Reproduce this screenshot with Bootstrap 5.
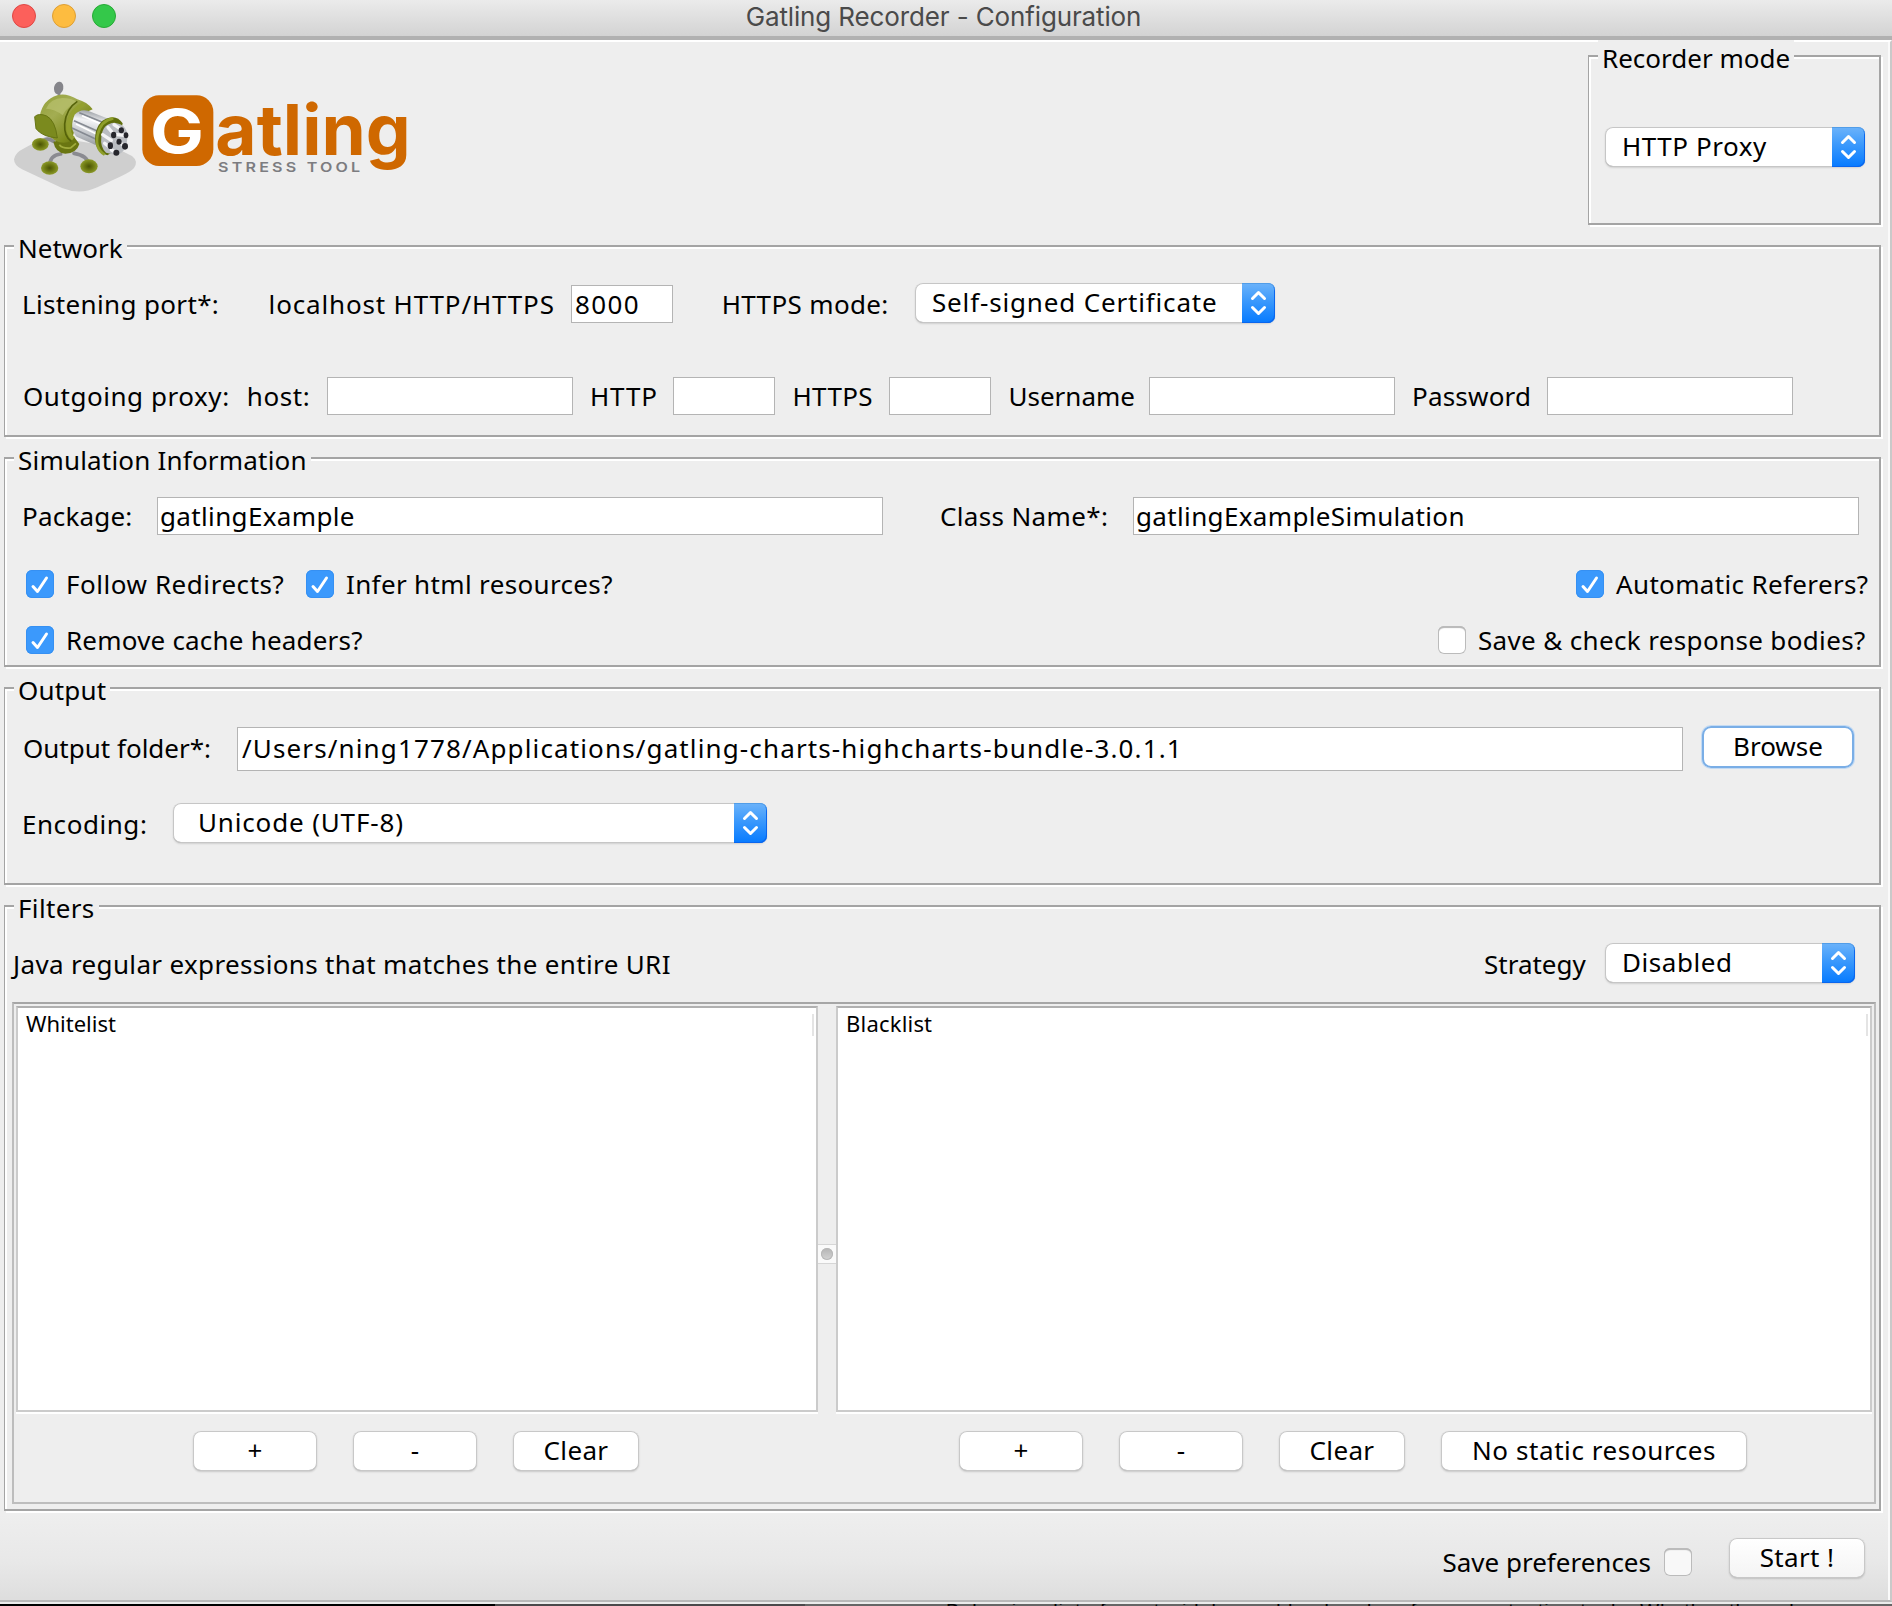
<!DOCTYPE html>
<html lang="en">
<head>
<meta charset="utf-8">
<title>Gatling Recorder - Configuration</title>
<link href="https://cdn.jsdelivr.net/npm/bootstrap@5.3.0/dist/css/bootstrap.min.css" rel="stylesheet">
<style>
  body { width: 1892px; height: 1606px; overflow: hidden; background: #555; color: #000;
    font-family: "Noto Sans", sans-serif; font-size: 26px; line-height: 38px; letter-spacing: .35px; white-space: nowrap; }

  /* letter-spacing steps */
  .ls-0 { letter-spacing: 0; }
  .ls-2 { letter-spacing: .2px; }
  .ls-5 { letter-spacing: .55px; }
  .ls-9 { letter-spacing: .84px; }
  .ls-12 { letter-spacing: 1.13px; }
  .ls-16 { letter-spacing: 1.4px; }

  /* title bar */
  .titlebar { height: 40px; background: linear-gradient(#ebebeb, #d3d3d3 36px); border-bottom: 4px solid #b1b1b1; }
  .titlebar h1 { font: 400 26px/34px Inter, sans-serif; color: #4a4a4a; letter-spacing: -.13px; padding: 0 5px 0 0; margin: 0; }
  .lights { left: 12px; top: 4px; gap: 16px; }
  .lights i { width: 24px; height: 24px; border-radius: 50%; border: 1px solid; }
  .l-close { background: #fc605b; border-color: #df4744 !important; }
  .l-min { background: #fdbc40; border-color: #de9f34 !important; }
  .l-zoom { background: #34c84a; border-color: #27aa35 !important; }

  /* window body */
  .window-body { height: 1562px; background: linear-gradient(#eee 1473px, #e8e8e8 1520px, #dddddd 1560px);
    border-top: 2px solid #fff; border-right: 2px solid #c9c9c9; border-bottom: 2px solid #b9b9b9; box-shadow: inset -2px 0 #fafafa; padding-left: 4px; padding-right: 9px; }
  .head-area { height: 203px; }
  .logo { width: 440px; height: 166px; margin-left: -4px; }

  /* etched group box */
  .etched { border: 2px solid #a4a4a4; border-left-width: 1px; box-shadow: 2px 2px 0 #fff, inset 2px 2px 0 #fff; margin-bottom: 20px; }
  .etched > .cap { float: none; display: table; margin: -18px 0 0 9px; padding: 0 4px; width: auto; font-size: inherit; line-height: 38px; background: #eee; height: 38px; }
  .recorder { width: 293px; height: 170px; margin-top: 13px; }
  .recorder .pop { margin: 50px 0 0 16px; width: 260px; }

  .line { display: grid; height: 38px; }
  .line > label { padding-left: 1px; }
  .line > .chk { padding-left: 0; }
  .line-port { grid-template-columns: 246.6px 303.4px 149.7px 194.3px 360px; padding-left: 16px; margin-top: 18px; }
  .line-proxy { grid-template-columns: 223.8px 81.2px 262px 84px 118.5px 97.5px 118.5px 141.5px 262px 136px 246px; padding-left: 17px; margin: 54px 0 20px; }
  .line-class { grid-template-columns: 136px 782px 194px 726px; padding-left: 16px; margin-top: 18px; }
  .line-chk1 { grid-template-columns: 280px 1270px auto; padding-left: 21px; margin-top: 30px; }
  .line-chk2 { grid-template-columns: 1412px auto; padding-left: 21px; margin: 18px 0 6px; }
  .line-folder { grid-template-columns: 215px 1465px 152px; height: 44px; line-height: 42px; padding-left: 17px; margin-top: 18px; }
  .line-enc { grid-template-columns: 152px 594px; padding-left: 16px; margin: 34px 0 40px; }
  .line-strategy { grid-template-columns: 1470px 122px 250px; padding-left: 8px; margin-top: 18px; }

  /* text fields */
  .field { height: 38px; width: 246px; border: 1px solid #b4b4b4; border-radius: 0; padding: 0 2px; font: inherit; line-height: 36px; color: #000; background: #fff; box-shadow: none; letter-spacing: inherit; }
  .field-port { width: 102px; padding-left: 3px; }
  .field-long { width: 726px; }
  .field-path { width: 1446px; height: 44px; padding: 0 4px 2px; }
  .field.ls-16 { letter-spacing: 1.4px; }
  .field.ls-12 { letter-spacing: 1.13px; }

  /* pop-up menu */
  .pop { height: 40px; background: #fff; border-radius: 8px; padding-left: 17px; line-height: 38px;
    box-shadow: inset 0 0 0 1px #c6c6c6, inset 0 -1px #a8a8a8, 0 1px 2px rgba(0,0,0,.13); }
  .line .pop { margin-top: -2px; }
  .line .pop-wide { padding-left: 25px; }
  .pop .arrows { width: 33px; height: 40px; border-radius: 0 7px 7px 0; background: linear-gradient(#6cb3fa, #3b99fc 45%, #067aff); box-shadow: inset 0 1px #519de8, inset -1px -1px #0a66ee; }
  .arrows svg { display: block; }

  /* check boxes */
  .chk { gap: 12px; }
  .tick { width: 28px; height: 28px; border-radius: 6px; background: #fff; box-shadow: inset 0 0 0 1px #bbb, inset 0 2px 1px #b5b5b5; flex: none; }
  .tick-on { background: #3b99fc; box-shadow: inset 0 0 0 1px #3690f2; }
  .tick svg { display: block; }

  /* push buttons */
  .push { height: 40px; width: 124px; padding: 0; border: 0; border-radius: 8px; background: #fff; color: #000; font: inherit; line-height: 38px; letter-spacing: inherit;
    display: flex; align-items: flex-start; justify-content: center;
    box-shadow: inset 0 0 0 1px #c8c8c8, inset 0 -1px #a8a8a8, 0 1px 2px rgba(0,0,0,.16); }
  .push-clear { width: 126px; }
  .push-static { width: 306px; letter-spacing: .58px; }
  .push-focus { width: 152px; height: 42px; margin-top: -1px; line-height: 40px; border-radius: 9px; letter-spacing: 0; box-shadow: inset 0 0 0 2px #7aaee6, 0 0 0 1px #c3daf3; }
  .push-start { width: 136px; background: linear-gradient(#fff, #f4f4f4); margin-left: 37px; }

  /* filter tables */
  .tables { height: 502px; margin: 19px 3px 5px 7px; border: 2px solid #bdbdbd; border-top-color: #a6a6a6; padding: 2px; }
  .pane { height: 406px; background: #fff; border: 2px solid #cbcbcb; border-top-color: #b0b0b0; box-shadow: 0 2px #fff; padding: 0 2px 0 8px; font-size: 22px; line-height: 31px; }
  .pane-white { width: 802px; }
  .pane-black { width: 1036px; }
  .grip-col { width: 2px; height: 22px; background: #e4e4e4; margin-top: 6px; }
  .divider { width: 18px; padding-top: 238px; }
  .knob { height: 20px; background: #fafafa; border: solid #d6d6d6; border-width: 1px 0; }
  .knob i { width: 12px; height: 12px; border-radius: 50%; background: linear-gradient(#b4b4b4, #d4d4d4); box-shadow: inset 0 0 0 1px #b8b8b8; }
  .actions { gap: 36px; margin: 19px 0 0 177px; }
  .gap-mid { margin-left: 284px; }

  .foot { height: 38px; padding-right: 16px; margin-top: 32px; }
  .foot .tick { margin-left: 13px; background: #f8f8f8; }
  .foot .push { margin-top: -8px; }

  /* page showing under the window edge */
  .under { height: 4px; border-top: 2px solid #ececec; background: linear-gradient(90deg, #000 495px, #4b494b 495px, #4b494b 805px, #666 805px); }
  .under p { height: 2px; overflow: hidden; margin: 0 0 0 946px; font: 20px/20px "Liberation Sans", sans-serif; letter-spacing: .95px; }
  .under span { display: block; margin-top: -3px; }
</style>
</head>
<body>
<header class="titlebar position-relative">
  <div class="lights position-absolute d-flex"><i class="l-close"></i><i class="l-min"></i><i class="l-zoom"></i></div>
  <h1 class="text-center">Gatling Recorder - Configuration</h1>
</header>

<main class="window-body">
  <div class="head-area d-flex justify-content-between align-items-start">
    <svg class="logo" viewBox="0 126 1320 498">
      <defs>
        <linearGradient id="gr" x1="0" y1="0" x2="1" y2="1"><stop offset="0" stop-color="#93a03a"/><stop offset=".35" stop-color="#a3ad52"/><stop offset=".7" stop-color="#7f8c1c"/><stop offset="1" stop-color="#4f5a08"/></linearGradient>
        <radialGradient id="ft"><stop offset="0" stop-color="#4a5306"/><stop offset=".5" stop-color="#6b7711"/><stop offset="1" stop-color="#8c9a2a"/></radialGradient>
        <linearGradient id="br" x1=".6" y1="0" x2=".4" y2="1"><stop offset="0" stop-color="#8d9298"/><stop offset=".3" stop-color="#f2f3f5"/><stop offset=".7" stop-color="#b9bdc2"/><stop offset="1" stop-color="#85898e"/></linearGradient>
      </defs>
      <path d="M42 478Q45 458 70 446L140 408L340 440L396 468Q416 484 402 504Q392 516 360 530L292 562Q240 586 186 564L66 508Q42 496 42 478Z" fill="#cfcfcf"/>
      <g fill="none" stroke="#8a8a90" stroke-width="11" stroke-linecap="round">
        <path d="M160 424Q138 408 122 432"/><path d="M182 462Q150 464 148 500"/><path d="M222 460Q262 466 266 494"/><path d="M177 298V270" stroke-width="8"/>
      </g>
      <ellipse cx="176" cy="264" rx="14" ry="19" fill="#85858a" transform="rotate(12 176 264)"/>
      <ellipse cx="121" cy="433" rx="25" ry="19" fill="url(#ft)"/>
      <ellipse cx="149" cy="504" rx="26" ry="20" fill="url(#ft)"/>
      <ellipse cx="267" cy="499" rx="26" ry="21" fill="url(#ft)"/>
      <path d="M160 425Q166 458 196 461Q230 460 238 432L222 410Z" fill="#6a7611"/>
      <path d="M178 434Q186 446 212 444L228 430" fill="none" stroke="#a2ad3e" stroke-width="5"/>
      <path d="M120 346Q128 300 172 286Q198 278 232 298Q262 306 278 328L238 346L214 422Q192 434 166 422L124 390Z" fill="url(#gr)"/>
      <path d="M104 350Q116 338 140 348Q166 362 172 414Q126 410 108 386Z" fill="#7b8a1e" stroke="#667413" stroke-width="3"/>
      <path d="M138 326Q152 294 188 294Q214 294 232 306Q202 318 188 346Q164 326 138 326Z" fill="#bcc371" opacity=".65"/>
      <path d="M232 304Q198 326 194 372Q192 410 214 424" fill="none" stroke="#55620a" stroke-width="5"/>
      <path d="M252 312Q214 328 206 370Q202 402 220 416" fill="none" stroke="#93a02f" stroke-width="13"/>
      <path d="M224 344Q240 326 264 332L344 364L312 446L230 410Q206 386 224 344Z" fill="url(#br)"/>
      <path d="M238 338L330 376M222 362L312 402M216 384L306 426" stroke="#858a92" stroke-width="5"/>
      <path d="M246 347L326 382M228 372L306 410" stroke="#fff" stroke-width="5"/>
      <path d="M322 466Q280 452 286 404Q294 356 338 352Q356 352 368 370L350 450Z" fill="#5f6d0c"/>
      <path d="M314 464Q284 446 293 404Q302 362 340 355" fill="none" stroke="#8f9f2a" stroke-width="8"/>
      <path d="M304 410Q308 370 344 368Q382 374 382 408Q382 456 350 466L318 458Q300 440 304 410Z" fill="#babdc2"/>
      <path d="M324 382L338 399M342 374L360 386M308 404L334 421M314 430L330 442M334 450L346 456M350 404L374 406M352 424L372 436" fill="none" stroke="#f4f4f6" stroke-width="10" stroke-linecap="round"/>
      <g fill="#26262c"><ellipse cx="341" cy="405" rx="8" ry="10"/><ellipse cx="364" cy="391" rx="8" ry="9"/><ellipse cx="378" cy="406" rx="7" ry="9"/><ellipse cx="375" cy="439" rx="9" ry="10"/><ellipse cx="349" cy="458" rx="9" ry="9"/><ellipse cx="331" cy="437" rx="8" ry="10"/><ellipse cx="357" cy="425" rx="8" ry="9"/></g>
      <rect x="427" y="286" width="213" height="212" rx="50" fill="#cf6800"/>
      <text x="450" y="460" font-family="Inter, sans-serif" font-weight="700" font-size="182" fill="#fff" letter-spacing="0" textLength="162" lengthAdjust="spacingAndGlyphs">G</text>
      <text x="646" y="466" font-family="Inter, sans-serif" font-weight="700" font-size="211" fill="#cf6800" letter-spacing="0" textLength="586" lengthAdjust="spacingAndGlyphs">atling</text>
      <text x="654" y="515" font-family="Inter, sans-serif" font-weight="600" font-size="40" fill="#7c7c80" letter-spacing="8" textLength="436" lengthAdjust="spacingAndGlyphs">STRESS TOOL</text>
    </svg>
    <fieldset class="etched recorder">
      <div class="cap ls-0">Recorder mode</div>
      <div class="pop d-flex justify-content-between ls-5"><span>HTTP Proxy</span><span class="arrows"><svg width="33" height="40" fill="none" stroke="#fff" stroke-width="3" stroke-linecap="round" stroke-linejoin="round"><path d="M10.500 15.500L16.500 9.500L22.500 15.500M10.500 24.500L16.500 30.500L22.500 24.500"/></svg></span></div>
    </fieldset>
  </div>

  <section class="etched">
    <div class="cap ls-0">Network</div>
    <div class="line line-port">
      <label>Listening port*:</label><label class="ls-9">localhost HTTP/HTTPS</label>
      <input class="form-control field field-port ls-16" value="8000">
      <label>HTTPS mode:</label>
      <div class="pop d-flex justify-content-between ls-9"><span>Self-signed Certificate</span><span class="arrows"><svg width="33" height="40" fill="none" stroke="#fff" stroke-width="3" stroke-linecap="round" stroke-linejoin="round"><path d="M10.500 15.500L16.500 9.500L22.500 15.500M10.500 24.500L16.500 30.500L22.500 24.500"/></svg></span></div>
    </div>
    <div class="line line-proxy">
      <label class="ls-5">Outgoing proxy:</label><label class="ls-5">host:</label><input class="form-control field">
      <label class="ls-9">HTTP</label><input class="form-control field field-port">
      <label>HTTPS</label><input class="form-control field field-port">
      <label class="ls-0">Username</label><input class="form-control field">
      <label class="ls-2">Password</label><input class="form-control field" type="password">
    </div>
  </section>

  <section class="etched">
    <div class="cap ls-2">Simulation Information</div>
    <div class="line line-class">
      <label class="ls-2">Package:</label><input class="form-control field field-long" value="gatlingExample">
      <label>Class Name*:</label><input class="form-control field field-long" value="gatlingExampleSimulation">
    </div>
    <div class="line line-chk1">
      <label class="chk d-flex align-items-center ls-5"><span class="tick tick-on"><svg width="28" height="28" fill="none" stroke="#fff" stroke-width="3" stroke-linecap="round" stroke-linejoin="round"><path d="M7 16.500L11.500 21.500L20.500 8"/></svg></span>Follow Redirects?</label>
      <label class="chk d-flex align-items-center"><span class="tick tick-on"><svg width="28" height="28" fill="none" stroke="#fff" stroke-width="3" stroke-linecap="round" stroke-linejoin="round"><path d="M7 16.500L11.500 21.500L20.500 8"/></svg></span>Infer html resources?</label>
      <label class="chk d-flex align-items-center"><span class="tick tick-on"><svg width="28" height="28" fill="none" stroke="#fff" stroke-width="3" stroke-linecap="round" stroke-linejoin="round"><path d="M7 16.500L11.500 21.500L20.500 8"/></svg></span>Automatic Referers?</label>
    </div>
    <div class="line line-chk2">
      <label class="chk d-flex align-items-center ls-2"><span class="tick tick-on"><svg width="28" height="28" fill="none" stroke="#fff" stroke-width="3" stroke-linecap="round" stroke-linejoin="round"><path d="M7 16.500L11.500 21.500L20.500 8"/></svg></span>Remove cache headers?</label>
      <label class="chk d-flex align-items-center"><span class="tick"></span>Save &amp; check response bodies?</label>
    </div>
  </section>

  <section class="etched">
    <div class="cap ls-2">Output</div>
    <div class="line line-folder">
      <label class="ls-0">Output folder*:</label>
      <input class="form-control field field-path ls-12" value="/Users/ning1778/Applications/gatling-charts-highcharts-bundle-3.0.1.1">
      <button class="btn push push-focus">Browse</button>
    </div>
    <div class="line line-enc">
      <label class="ls-5">Encoding:</label>
      <div class="pop pop-wide d-flex justify-content-between ls-9"><span>Unicode (UTF-8)</span><span class="arrows"><svg width="33" height="40" fill="none" stroke="#fff" stroke-width="3" stroke-linecap="round" stroke-linejoin="round"><path d="M10.500 15.500L16.500 9.500L22.500 15.500M10.500 24.500L16.500 30.500L22.500 24.500"/></svg></span></div>
    </div>
  </section>

  <section class="etched mb-0">
    <div class="cap">Filters</div>
    <div class="line line-strategy">
      <span>Java regular expressions that matches the entire URI</span>
      <label class="ls-0">Strategy</label>
      <div class="pop d-flex justify-content-between ls-5"><span>Disabled</span><span class="arrows"><svg width="33" height="40" fill="none" stroke="#fff" stroke-width="3" stroke-linecap="round" stroke-linejoin="round"><path d="M10.500 15.500L16.500 9.500L22.500 15.500M10.500 24.500L16.500 30.500L22.500 24.500"/></svg></span></div>
    </div>
    <div class="tables">
      <div class="d-flex">
        <div class="pane pane-white d-flex justify-content-between ls-0"><span>Whitelist</span><span class="grip-col"></span></div>
        <div class="divider"><div class="knob d-flex align-items-center justify-content-center"><i></i></div></div>
        <div class="pane pane-black d-flex justify-content-between ls-2"><span>Blacklist</span><span class="grip-col"></span></div>
      </div>
      <div class="actions d-flex">
        <button class="btn push">+</button><button class="btn push">-</button><button class="btn push push-clear">Clear</button>
        <button class="btn push gap-mid">+</button><button class="btn push">-</button><button class="btn push push-clear">Clear</button>
        <button class="btn push push-static">No static resources</button>
      </div>
    </div>
  </section>

  <div class="foot d-flex justify-content-end align-items-center">
    <label class="ls-0">Save preferences</label><span class="tick"></span>
    <button class="btn push push-start">Start !</button>
  </div>
</main>

<div class="under"><p><span>Below is a list of most widely used load and performance testing tools. Whether those be open</span></p></div>
<script src="https://cdn.jsdelivr.net/npm/bootstrap@5.3.0/dist/js/bootstrap.bundle.min.js"></script>
</body>
</html>
